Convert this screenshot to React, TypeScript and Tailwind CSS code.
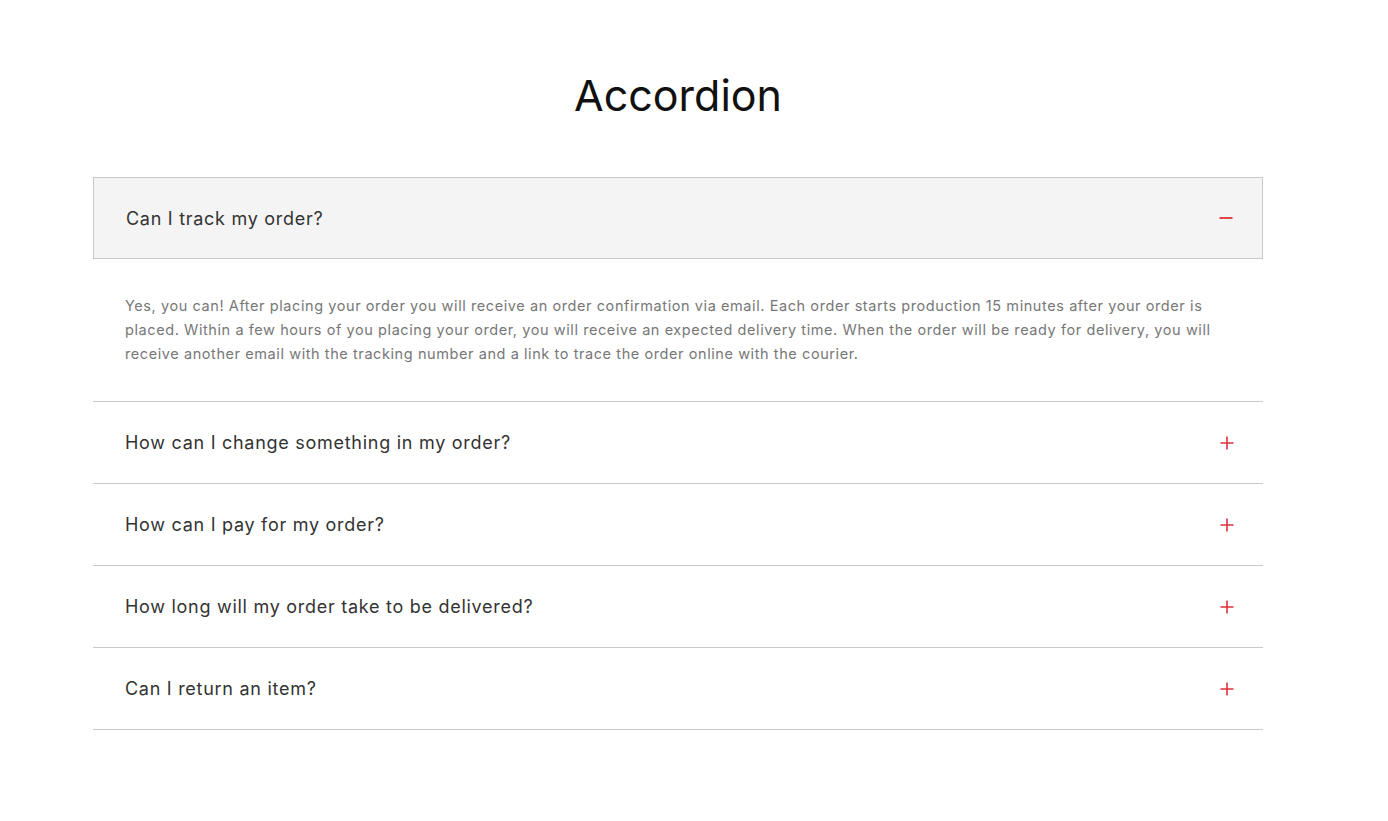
import React from "react";

const items = [
  "How can I change something in my order?",
  "How can I pay for my order?",
  "How long will my order take to be delivered?",
  "Can I return an item?",
];

function Plus() {
  return (
    <svg width="14" height="14" viewBox="0 0 14 14" className="shrink-0">
      <path d="M7 0.5V13.5M0.5 7H13.5" stroke="#e0303c" strokeWidth="1.6" />
    </svg>
  );
}

function Minus() {
  return (
    <svg width="14" height="14" viewBox="0 0 14 14" className="shrink-0">
      <path d="M0.5 7H13.5" stroke="#e0303c" strokeWidth="1.8" />
    </svg>
  );
}

export default function App() {
  return (
    <div className="min-h-[821px] bg-white" style={{ fontFamily: "Inter, 'Noto Sans', sans-serif" }}>
      <div className="ml-[93px] w-[1170px] pt-[68px]">
        <h1 className="text-center text-[43px] leading-[54px] text-[#111]">Accordion</h1>
        <div className="mt-[55px]">
          <div className="flex h-[82px] items-center justify-between border border-[#c9c9c9] bg-[#f4f4f4] pl-[32px] pr-[29px]">
            <span className="text-[18px] tracking-[0.04em] text-[#333]">Can I track my order?</span>
            <Minus />
          </div>
          <div className="border-b border-[#c9c9c9] pl-[32px] pr-[20px] pt-[35px] pb-[35px] text-[14.5px] tracking-[0.04em] leading-[24px] text-[#777]">
            Yes, you can! After placing your order you will receive an order confirmation via email. Each order starts production 15 minutes after your order is<br />
            placed. Within a few hours of you placing your order, you will receive an expected delivery time. When the order will be ready for delivery, you will<br />
            receive another email with the tracking number and a link to trace the order online with the courier.
          </div>
          {items.map((q) => (
            <div key={q} className="flex h-[82px] items-center justify-between border-b border-[#c9c9c9] pl-[32px] pr-[29px]">
              <span className="text-[18px] tracking-[0.04em] text-[#333]">{q}</span>
              <Plus />
            </div>
          ))}
        </div>
      </div>
    </div>
  );
}
